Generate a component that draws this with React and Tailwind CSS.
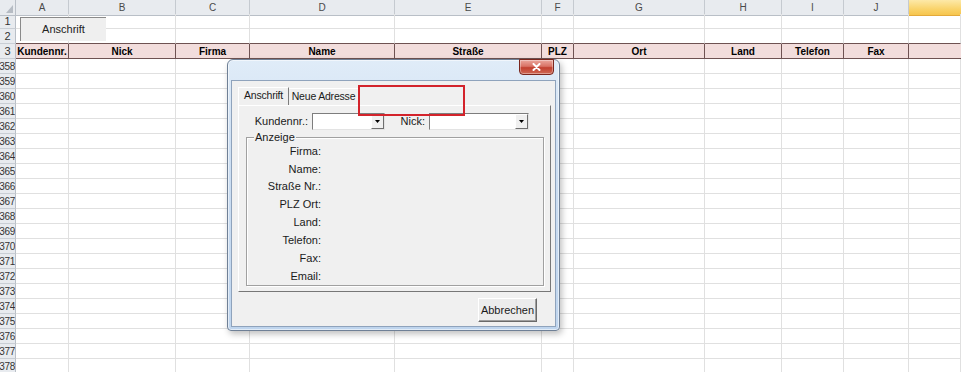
const GRID =
  "grid grid-cols-[16px_53px_107px_74px_145px_147px_32px_131px_77px_62px_65px_1fr]";

const LETTERS = ["A", "B", "C", "D", "E", "F", "G", "H", "I", "J", "K"];
const HEAD = ["Kundennr.", "Nick", "Firma", "Name", "Straße", "PLZ", "Ort", "Land", "Telefon", "Fax", ""];
const DATA_ROWS = Array.from({ length: 21 }, (_, i) => 358 + i);

function RowHead({ label, multi, border }) {
  return (
    <div
      className={
        "flex items-center overflow-hidden whitespace-nowrap bg-[#e8ebef] border-r border-r-[#b9bfc7] text-[#333] " +
        (multi ? "justify-end pr-0 text-[10px] tracking-[-0.3px] " : "justify-center text-[11px] ") +
        (border ? "border-b border-b-[#c9ced5]" : "")
      }
    >
      {label}
    </div>
  );
}

function Sheet() {
  return (
    <div className="flex flex-col">
      {/* column headers */}
      <div className={GRID + " h-[14px]"}>
        <div className="relative bg-[#e8ebef] border-r border-b border-[#b9bfc7]">
          <svg className="absolute right-[2px] bottom-[2px]" width="7" height="8" viewBox="0 0 7 8">
            <polygon points="7,0 7,8 0,8" fill="#b6bcc4" />
          </svg>
        </div>
        {LETTERS.map((l) =>
          l === "K" ? (
            <div
              key={l}
              className="bg-[linear-gradient(180deg,#fde9a8_0%,#f9d36b_60%,#f6c54d_100%)] border-b border-b-[#e3a93a]"
            />
          ) : (
            <div
              key={l}
              className="flex items-center justify-center bg-[#e8ebef] border-r border-b border-r-[#c5cad0] border-b-[#b9bfc7] text-[10px] text-[#4a4a4a]"
            >
              {l}
            </div>
          )
        )}
      </div>
      {/* row 1 */}
      <div className={GRID + " h-[15px]"}>
        <RowHead label="1" border />
        {LETTERS.map((l) => (
          <div key={l} className="border-r border-b border-[#e0e0e0]" />
        ))}
      </div>
      {/* row 2 */}
      <div className={GRID + " h-[15px]"}>
        <RowHead label="2" border />
        {LETTERS.map((l) => (
          <div key={l} className="border-r border-r-[#e0e0e0] border-b border-b-[#6e5252]" />
        ))}
      </div>
      {/* row 3 */}
      <div className={GRID + " h-[15px]"}>
        <RowHead label="3" border />
        {HEAD.map((h, i) => (
          <div
            key={i}
            className={
              "flex items-center justify-center overflow-hidden whitespace-nowrap bg-[#f2dddc] border-b border-b-[#6e5252] text-[10px] font-bold text-black " +
              (i < 10 ? "border-r border-r-[#6e5252]" : "")
            }
          >
            {h}
          </div>
        ))}
      </div>
      {DATA_ROWS.map((r) => (
        <div key={r} className={GRID + " h-[15px]"}>
          <RowHead label={String(r)} multi border />
          {LETTERS.map((l) => (
            <div key={l} className="border-r border-b border-[#e0e0e0]" />
          ))}
        </div>
      ))}
    </div>
  );
}

function Combo({ className }) {
  return (
    <div
      className={
        "flex h-[17px] bg-white border border-t-[#7d7d7d] border-l-[#7d7d7d] border-r-[#e3e3e3] border-b-[#e3e3e3] " +
        className
      }
    >
      <div className="flex-1" />
      <div className="flex w-[13px] items-center justify-center bg-[#f0f0f0] border border-t-white border-l-white border-r-[#6f6f6f] border-b-[#6f6f6f]">
        <svg width="5" height="3" viewBox="0 0 5 3">
          <polygon points="0,0 5,0 2.5,3" fill="#000" />
        </svg>
      </div>
    </div>
  );
}

const FIELDS = ["Firma:", "Name:", "Straße Nr.:", "PLZ Ort:", "Land:", "Telefon:", "Fax:", "Email:"];

function Dialog() {
  return (
    <div className="absolute left-[227px] top-[59px] flex h-[272px] w-[333px] flex-col rounded-t-[6px] rounded-b-[4px] border border-[#6f8096] bg-[linear-gradient(180deg,#e0ecf8_0%,#cfe0f3_30%,#bfd5ee_100%)] px-[3px] pt-[20px] pb-[3px] shadow-[inset_0_0_0_1px_rgba(255,255,255,0.55),2px_3px_6px_rgba(0,0,0,0.25)]">
      {/* close button */}
      <div className="absolute right-[5px] top-[-1px] flex h-[16px] w-[35px] items-center justify-center rounded-b-[4px] border border-[#7a261d] bg-[linear-gradient(180deg,#eba79d_0%,#d97365_45%,#c2402f_55%,#cf6a56_100%)] shadow-[inset_0_0_0_1px_rgba(255,255,255,0.35)]">
        <svg width="9" height="8" viewBox="0 0 9 8">
          <path d="M1.5 1 L7.5 7 M7.5 1 L1.5 7" stroke="#fff" strokeWidth="2" strokeLinecap="round" />
        </svg>
      </div>

      {/* client */}
      <div className="flex flex-1 flex-col border border-[#8fa3bc] bg-[#f0f0f0] pt-[6px] pl-[6px] pr-[3px] text-[11px] text-[#1a1a1a]">
        {/* tabs */}
        <div className="flex h-[18px] items-end text-[10.5px] tracking-[-0.2px] whitespace-nowrap">
          <div className="flex h-[18px] w-[51px] items-center justify-center border-l border-t border-r border-l-white border-t-white border-r-[#7d7d7d] pb-[1px]">
            Anschrift
          </div>
          <div className="flex h-[17px] w-[69px] items-center justify-center border-t border-t-white pb-[1px]">
            Neue Adresse
          </div>
        </div>
        {/* panel */}
        <div className="flex h-[187px] w-[313px] flex-col border border-l-white border-t-white border-r-[#777] border-b-[#777]">
          <div className="mt-[7px] flex h-[17px] items-center">
            <div className="w-[69px] text-right">Kundennr.:</div>
            <Combo className="ml-[4px] w-[73px]" />
            <div className="w-[40px] text-right">Nick:</div>
            <Combo className="ml-[4px] w-[100px]" />
          </div>
          <div className="relative ml-[7px] mt-[7px] flex h-[149px] w-[298px] flex-col border border-[#a0a0a0] pt-[4px] shadow-[inset_1px_1px_0_#fff,1px_1px_0_#fff]">
            <div className="absolute left-[7px] top-[-8px] bg-[#f0f0f0] px-[1px] leading-[14px]">Anzeige</div>
            {FIELDS.map((f) => (
              <div key={f} className="flex h-[18px] items-center">
                <div className="w-[74px] text-right">{f}</div>
              </div>
            ))}
          </div>
        </div>
        {/* button */}
        <div className="mt-[6px] flex w-[313px] justify-end pr-[14px]">
          <div className="flex h-[24px] w-[59px] items-center justify-center border border-l-white border-t-white border-r-[#6a6a6a] border-b-[#6a6a6a] bg-[#ececec] shadow-[inset_-1px_-1px_0_#a0a0a0]">
            Abbrechen
          </div>
        </div>
      </div>

      {/* red highlight */}
      <div className="absolute left-[130px] top-[25px] h-[31px] w-[107px] border-2 border-[#d3232b]" />
    </div>
  );
}

export default function App() {
  return (
    <div className="relative h-[372px] w-[961px] overflow-hidden bg-white font-['Liberation_Sans',Arial,sans-serif]">
      <Sheet />
      {/* Anschrift command button */}
      <div className="absolute left-[20px] top-[17px] flex h-[24px] w-[86px] items-center justify-center border-l border-t border-[#8a8a8a] bg-[#efefef] text-[11px] text-[#222]">
        Anschrift
      </div>
      <Dialog />
    </div>
  );
}
